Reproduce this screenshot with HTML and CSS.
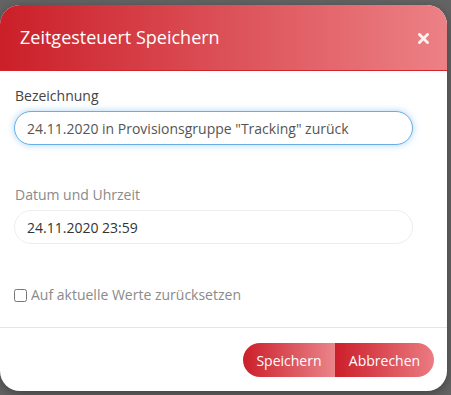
FILE: index.html
```html
<!DOCTYPE html>
<html lang="de">
<head>
    <meta charset="UTF-8">
    <meta name="viewport" content="width=device-width, initial-scale=1.0">
    <title>Zeitgesteuert Speichern</title>
    <link rel="stylesheet" href="styles.css">
</head>
<body>

    <div class="modal">
        <div class="modal-header">
            <h4 class="modal-title">Zeitgesteuert Speichern</h4>
            <button class="close" type="button" aria-label="Schließen">
                <svg width="11" height="11" viewBox="0 0 11 11">
                    <path d="M1.5 1.5 L9.5 9.5 M9.5 1.5 L1.5 9.5" stroke="#fff" stroke-width="2.8" stroke-linecap="square" fill="none"/>
                </svg>
            </button>
        </div>

        <div class="modal-body">
            <div class="form-group">
                <label for="bezeichnung">Bezeichnung</label>
                <input type="text" id="bezeichnung" class="form-control focused" value='24.11.2020 in Provisionsgruppe "Tracking" zurück'>
            </div>

            <div class="form-group">
                <label for="datum" class="muted">Datum und Uhrzeit</label>
                <input type="text" id="datum" class="form-control plain" value="24.11.2020 23:59">
            </div>

            <div class="checkbox">
                <input type="checkbox" id="reset">
                <label for="reset">Auf aktuelle Werte zurücksetzen</label>
            </div>
        </div>

        <div class="modal-footer">
            <div class="btn-group">
                <button class="btn first" type="button">Speichern</button>
                <button class="btn last" type="button">Abbrechen</button>
            </div>
        </div>
    </div>

</body>
</html>
```

FILE: styles.css
```css
body {
    margin: 0;
    padding-top: 5px;
    background-color: #646464;
    font-family: "Open Sans", "Liberation Sans", sans-serif;
    font-size: 14px;
    color: #333;
    height: 395px;
    box-sizing: border-box;
    overflow: hidden;
}
.modal {
    width: 447px;
    background-color: #fff;
    border-radius: 20px;
    overflow: hidden;
    box-shadow: 0 3px 12px rgba(0, 0, 0, 0.35);
}
.modal-header {
    height: 65px;
    padding: 0 20px;
    display: flex;
    align-items: center;
    justify-content: space-between;
    background: linear-gradient(to right, #cb1f29, #ec8185);
    border-bottom: 1px solid #d3232d;
}
.modal-title {
    margin: 0;
    font-size: 18px;
    font-weight: normal;
    color: #fff;
    line-height: 25px;
}
.close {
    background: none;
    border: none;
    padding: 0;
    margin-right: -2px;
    margin-top: 1px;
    opacity: 0.9;
    display: flex;
}
.modal-body {
    padding: 15px 34px 15px 14px;
}
.form-group {
    margin-bottom: 40px;
}
.form-group label {
    display: block;
    line-height: 20px;
    margin: 0 0 5px 1px;
    color: #444;
}
.form-group label.muted {
    color: #8a8a8a;
}
.form-control {
    display: block;
    width: 100%;
    height: 34px;
    box-sizing: border-box;
    padding: 0 12px;
    border-radius: 17px;
    font-family: inherit;
    font-size: 14px;
    outline: none;
}
.form-control.focused {
    border: 1px solid #66afe9;
    box-shadow: 0 0 7px rgba(102, 175, 233, 0.55);
    color: #555;
}
.form-control.plain {
    border: 1px solid #ededed;
    color: #333;
}
.checkbox {
    display: flex;
    align-items: center;
    line-height: 20px;
    margin-top: 41px;
    margin-bottom: 7px;
}
.checkbox input {
    width: 13px;
    height: 13px;
    margin: 0 4px 0 0;
}
.checkbox label {
    color: #8a8a8a;
}
.modal-footer {
    border-top: 1px solid #e5e5e5;
    padding: 15px 13px 14px;
    display: flex;
    justify-content: flex-end;
}
.btn-group {
    display: flex;
}
.btn {
    height: 34px;
    padding: 0 12px;
    border: none;
    color: #fff;
    font-family: inherit;
    font-size: 14px;
    background: linear-gradient(to right, #cc1f2a, #ea858a);
    cursor: pointer;
}
.btn.first {
    width: 92px;
    border-radius: 17px 0 0 17px;
}
.btn.last {
    width: 99px;
    border-radius: 0 17px 17px 0;
    background: linear-gradient(to right, #cc1f2a, #eb7b82);
}
```
